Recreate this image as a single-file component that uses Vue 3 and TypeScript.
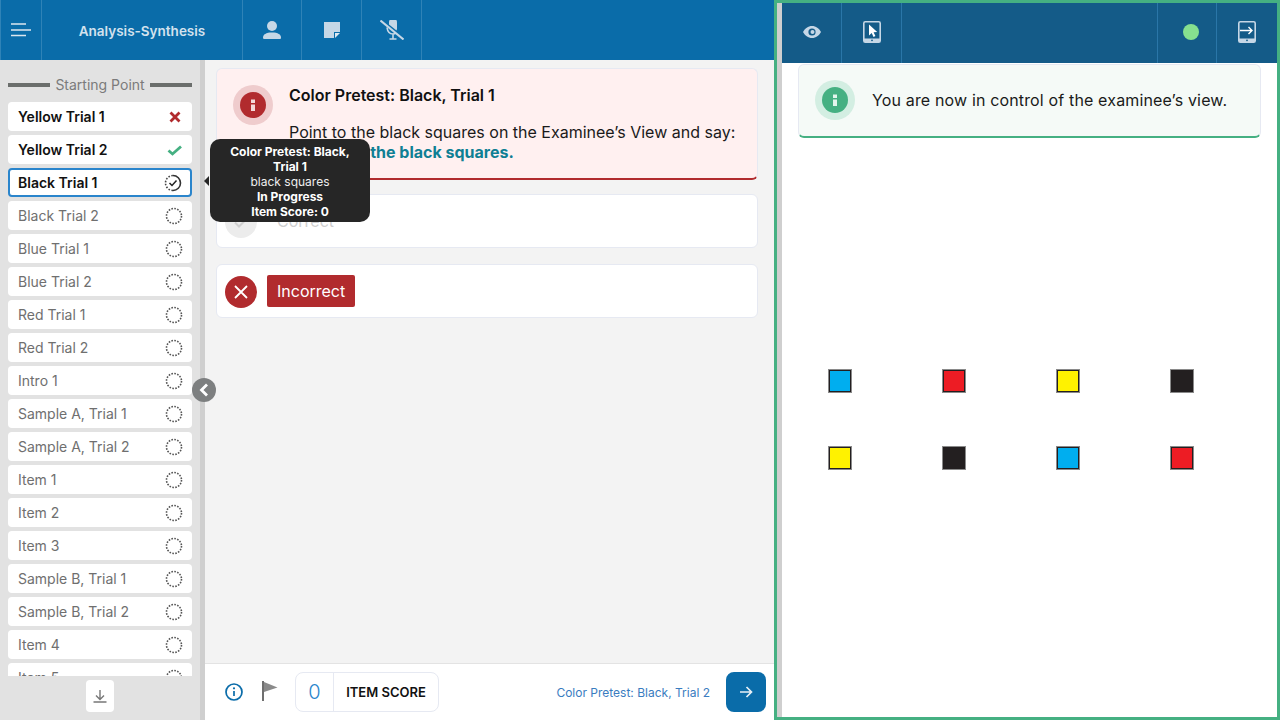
<script setup lang="ts">
interface Item {
  label: string
  status?: 'wrong' | 'correct' | 'progress'
}

const items: Item[] = [
  { label: 'Yellow Trial 1', status: 'wrong' },
  { label: 'Yellow Trial 2', status: 'correct' },
  { label: 'Black Trial 1', status: 'progress' },
  { label: 'Black Trial 2' },
  { label: 'Blue Trial 1' },
  { label: 'Blue Trial 2' },
  { label: 'Red Trial 1' },
  { label: 'Red Trial 2' },
  { label: 'Intro 1' },
  { label: 'Sample A, Trial 1' },
  { label: 'Sample A, Trial 2' },
  { label: 'Item 1' },
  { label: 'Item 2' },
  { label: 'Item 3' },
  { label: 'Sample B, Trial 1' },
  { label: 'Sample B, Trial 2' },
  { label: 'Item 4' },
  { label: 'Item 5' },
]

const squares = [
  '#00aeef', '#ed1c24', '#fff200', '#231f20',
  '#fff200', '#231f20', '#00aeef', '#ed1c24',
]
</script>

<template>
  <div class="app">
    <section class="examiner">
      <header class="topbar">
        <button class="cell menu" aria-label="Menu">
          <svg width="20" height="14" viewBox="0 0 20 14">
            <path d="M0 1h15M0 7h20M0 12.500h15" stroke="#dbe6ef" stroke-width="1.600" fill="none" />
          </svg>
        </button>
        <div class="cell title">Analysis-Synthesis</div>
        <button class="cell person" aria-label="Examinee">
          <svg width="18" height="18" viewBox="0 0 18 18" fill="#c6d7e6">
            <circle cx="9" cy="5" r="5" />
            <path d="M0 16.500C0 13.500 3 11.500 9 11.500s9 2 9 5c0 1-.5 1.500-1.500 1.500h-15C.5 18 0 17.500 0 16.500z" />
          </svg>
        </button>
        <button class="cell" aria-label="Notes">
          <svg width="16" height="16" viewBox="0 0 16 16">
            <path d="M0 0h16v10h-6v6H0z" fill="#c6d7e6" />
            <path d="M11 11h5l-5 5z" fill="#dfe8f0" />
          </svg>
        </button>
        <button class="cell" aria-label="Microphone off">
          <svg width="24" height="20" viewBox="0 0 24 20" fill="none" stroke="#c6d7e6">
            <path d="M9 2.500a4 4 0 0 1 8 0V9l-.5 1.500L9 4.500z" fill="#c6d7e6" stroke="none" />
            <path d="M7 7.500c.5 4 3 6.500 6 6.500 1 0 2-.2 2.800-.8M13 14v4.500M9.500 19h7" stroke-width="1.600" />
            <path d="M.5.500l23 19" stroke-width="2" />
          </svg>
        </button>
      </header>

      <div class="workspace">
        <aside class="sidebar">
          <div class="start"><span>Starting Point</span></div>
          <ul class="list">
            <li
              v-for="item in items"
              :key="item.label"
              class="row"
              :class="{ done: item.status, current: item.status === 'progress' }"
            >
              <span>{{ item.label }}</span>
              <svg v-if="item.status === 'wrong'" class="mark" width="16" height="16" viewBox="0 0 16 16">
                <path d="M3.500 3.500l9 9M12.500 3.500l-9 9" stroke="#b12b2e" stroke-width="2.800" fill="none" />
              </svg>
              <svg v-else-if="item.status === 'correct'" class="mark" width="16" height="16" viewBox="0 0 16 16">
                <path d="M1.500 8.500l4 3.500 8.500-7.500" stroke="#45b082" stroke-width="2.800" fill="none" />
              </svg>
              <svg v-else-if="item.status === 'progress'" class="mark" width="18" height="18" viewBox="0 0 18 18" fill="none">
                <path d="M9 1.500a7.500 7.500 0 0 1 0 15" stroke="#333" stroke-width="1.600" />
                <path d="M9 16.500a7.500 7.500 0 0 1 0-15" stroke="#444" stroke-width="1.600" stroke-dasharray="1.600 1.500" />
                <path d="M5.500 9l2.500 2.500 4.500-5" stroke="#222" stroke-width="1.500" />
              </svg>
              <svg v-else class="mark" width="18" height="18" viewBox="0 0 18 18" fill="none">
                <circle cx="9" cy="9" r="7.500" stroke="#555" stroke-width="1.600" stroke-dasharray="1.600 1.350" />
              </svg>
            </li>
          </ul>
          <div class="download">
            <button aria-label="Download">
              <svg width="14" height="14" viewBox="0 0 14 14" fill="none" stroke="#777" stroke-width="1.400">
                <path d="M7 1v9M3 6.500L7 10.500l4-4M.5 13h13" />
              </svg>
            </button>
          </div>
        </aside>

        <main class="main">
          <div class="content">
            <div class="alert">
              <span class="halo">
                <svg class="dot" width="26" height="26" viewBox="0 0 26 26">
                  <circle cx="13" cy="13" r="13" fill="#b12b2e" />
                  <path d="M11 7.500h4v3.500h-4zM11 12.500h4V19h-4z" fill="#f3d9d9" />
                </svg>
              </span>
              <div class="copy">
                <h2>Color Pretest: Black, Trial 1</h2>
                <p>
                  Point to the black squares on the Examinee’s View and say:
                  <strong>These are the black squares.</strong>
                </p>
              </div>
            </div>
            <div class="choice muted">
              <span class="choice-icon ok">
                <svg width="18" height="18" viewBox="0 0 18 18">
                  <path d="M3 9.500l4 4 8-8" stroke="#cfcfcf" stroke-width="2" fill="none" />
                </svg>
              </span>
              <span class="choice-label">Correct</span>
            </div>
            <div class="choice">
              <span class="choice-icon no">
                <svg width="18" height="18" viewBox="0 0 18 18">
                  <path d="M3 3l12 12M15 3L3 15" stroke="#fff" stroke-width="1.800" fill="none" />
                </svg>
              </span>
              <span class="badge">Incorrect</span>
            </div>
          </div>

          <footer class="footer">
            <svg class="info" width="18" height="18" viewBox="0 0 18 18" fill="none">
              <circle cx="9" cy="9" r="8" stroke="#0a6ca9" stroke-width="1.700" />
              <path d="M9 8v5" stroke="#0a6ca9" stroke-width="1.700" />
              <circle cx="9" cy="5.300" r="1.100" fill="#0a6ca9" />
            </svg>
            <svg class="flag" width="16" height="20" viewBox="0 0 16 20">
              <path d="M1 0v20" stroke="#6f6f6f" stroke-width="2" />
              <path d="M2 1l13.500 5.500L2 11z" fill="#8a8a8a" />
            </svg>
            <div class="score">
              <span class="num">0</span>
              <span class="score-label">ITEM SCORE</span>
            </div>
            <span class="next-label">Color Pretest: Black, Trial 2</span>
            <button class="next" aria-label="Next">
              <svg width="14" height="14" viewBox="0 0 14 14" fill="none" stroke="#e8f0f6" stroke-width="1.700">
                <path d="M1 7h11M7.500 2L12.500 7l-5 5" />
              </svg>
            </button>
          </footer>
        </main>

        <button class="collapse" aria-label="Collapse">
          <svg width="12" height="14" viewBox="0 0 12 14">
            <path d="M9 1.500L3.500 7 9 12.500" stroke="#fff" stroke-width="2.800" fill="none" />
          </svg>
        </button>

        <div class="tooltip">
          <b>Color Pretest: Black, Trial 1</b>
          <span>black squares</span>
          <b>In Progress</b>
          <b>Item Score: 0</b>
        </div>
      </div>
    </section>

    <section class="examinee">
      <div class="examinee-inner">
        <header class="viewbar">
          <button class="vcell" aria-label="View">
            <svg width="18" height="12" viewBox="0 0 18 12">
              <path d="M0 6c2-3.500 5-6 9-6s7 2.500 9 6c-2 3.500-5 6-9 6s-7-2.500-9-6z" fill="#c6d7e6" />
              <circle cx="9" cy="6" r="3.600" fill="#145b88" />
              <circle cx="9.500" cy="6" r="2" fill="#c6d7e6" />
            </svg>
          </button>
          <button class="vcell" aria-label="Control">
            <svg width="18" height="22" viewBox="0 0 18 22">
              <rect x=".8" y=".8" width="16.400" height="20.400" rx="1.500" fill="none" stroke="#c6d7e6" stroke-width="1.600" />
              <rect x="1" y="17.500" width="16" height="3.500" fill="#c6d7e6" />
              <circle cx="9" cy="19.300" r=".9" fill="#145b88" />
              <path d="M6 3.500l0 11 2.700-2.600 1.800 4 1.900-.9-1.800-3.800 3.600-.2z" fill="#fff" />
            </svg>
          </button>
          <span class="spacer"></span>
          <div class="vcell left-line status-cell"><span class="status"></span></div>
          <button class="vcell left-line last" aria-label="Exit">
            <svg width="18" height="22" viewBox="0 0 18 22">
              <rect x=".8" y=".8" width="16.400" height="20.400" rx="1.500" fill="none" stroke="#c6d7e6" stroke-width="1.600" />
              <rect x="1" y="17.500" width="16" height="3.500" fill="#c6d7e6" />
              <circle cx="9" cy="19.300" r=".9" fill="#145b88" />
              <path d="M2 9.500h12M10.500 6l3.500 3.500-3.500 3.500" fill="none" stroke="#fff" stroke-width="1.400" />
            </svg>
          </button>
        </header>
        <div class="view">
          <div class="notice">
            <span class="halo green">
              <svg class="dot" width="26" height="26" viewBox="0 0 26 26">
                <circle cx="13" cy="13" r="13" fill="#45b082" />
                <path d="M11 7.500h4v3.500h-4zM11 12.500h4V19h-4z" fill="#e3f5ec" />
              </svg>
            </span>
            <p>You are now in control of the examinee’s view.</p>
          </div>
          <div class="squares">
            <span
              v-for="(color, i) in squares"
              :key="i"
              class="square"
              :style="{ background: color }"
            ></span>
          </div>
        </div>
      </div>
    </section>
  </div>
</template>

<style>
html,
body {
  margin: 0;
  overflow: hidden;
}
</style>

<style scoped>
* {
  box-sizing: border-box;
}

button {
  border: none;
  padding: 0;
  background: none;
  font: inherit;
}

.app {
  display: flex;
  width: 1280px;
  height: 720px;
  font-family: Inter, "Liberation Sans", sans-serif;
  color: #111;
}

.examiner {
  display: flex;
  flex: none;
  flex-direction: column;
  width: 774px;
}

.topbar {
  display: flex;
  flex: none;
  height: 60px;
  background: #0a6ca9;
}

.cell {
  display: flex;
  align-items: center;
  justify-content: center;
  width: 60px;
  height: 60px;
  border-right: 1px solid #2f83b7;
}

.menu {
  width: 42px;
  border-left: 1px solid #2f83b7;
}

.title {
  width: 201px;
  padding-top: 1px;
  font-size: 13.500px;
  font-weight: 600;
  color: #d4e2ee;
}

.person {
  width: 59px;
}

.workspace {
  position: relative;
  display: flex;
  flex: 1;
  min-height: 0;
}

.sidebar {
  display: flex;
  flex: none;
  flex-direction: column;
  width: 205px;
  background: #e2e2e2;
  border-right: 5px solid #cfcfcf;
}

.start {
  display: flex;
  align-items: center;
  gap: 5px;
  height: 42px;
  padding: 7px 8px 0;
  font-size: 14px;
  color: #7b7b7b;
  white-space: nowrap;
}

.start::before,
.start::after {
  content: "";
  flex: 1;
  height: 4px;
  background: #6b6e6c;
}

.list {
  flex: 1;
  min-height: 0;
  margin: 0;
  padding: 0 8px;
  overflow: hidden;
  list-style: none;
}

.row {
  display: flex;
  align-items: center;
  justify-content: space-between;
  height: 29px;
  margin-bottom: 4px;
  padding: 0 9px 0 10px;
  border-radius: 4px;
  background: #fff;
  font-size: 14px;
  color: #6f6f6f;
}

.row.done {
  font-weight: 600;
  color: #111;
}

.row.current {
  border: 2px solid #2a85cc;
  padding: 0 8px;
}

.mark {
  flex: none;
}

.download {
  display: flex;
  flex: none;
  justify-content: center;
  height: 44px;
  padding-top: 4px;
}

.download button {
  display: flex;
  align-items: center;
  justify-content: center;
  width: 28px;
  height: 32px;
  border-radius: 4px;
  background: #fff;
}

.main {
  display: flex;
  flex: 1;
  flex-direction: column;
  min-width: 0;
  background: #f3f3f3;
}

.content {
  display: flex;
  flex: 1;
  flex-direction: column;
  gap: 16px;
  padding: 8px 16px 0 11px;
}

.alert {
  display: flex;
  gap: 16px;
  height: 112px;
  margin-bottom: -2px;
  padding: 16px;
  border: 1px solid #e6e9f2;
  border-bottom: 2px solid #b12b2e;
  border-radius: 6px;
  background: #fff0f0;
}

.halo {
  display: flex;
  flex: none;
  align-items: center;
  justify-content: center;
  width: 40px;
  height: 40px;
  border-radius: 50%;
  background: #efcccd;
}

.halo.green {
  background: #d3eee2;
}

.copy h2 {
  margin: 0;
  font-size: 16px;
  font-weight: 600;
  line-height: 20px;
  color: #111;
}

.copy p {
  margin: 17px 0 0;
  font-size: 16px;
  line-height: 20px;
  color: #1a1a1a;
}

.copy strong {
  font-weight: 700;
  color: #0f7f94;
}

.choice {
  display: flex;
  align-items: center;
  gap: 10px;
  height: 54px;
  padding: 0 8px;
  border: 1px solid #e6e9f2;
  border-radius: 6px;
  background: #fff;
}

.choice-icon {
  display: flex;
  flex: none;
  align-items: center;
  justify-content: center;
  width: 32px;
  height: 32px;
  margin-top: 1px;
  border-radius: 50%;
}

.choice-icon.ok {
  background: #ececec;
}

.choice-icon.no {
  background: #b12b2e;
}

.choice-label {
  padding-left: 10px;
  font-size: 16px;
  color: #cfcfcf;
}

.badge {
  display: flex;
  align-items: center;
  height: 32px;
  padding: 0 10px;
  border-radius: 2px;
  background: #b12b2e;
  font-size: 16px;
  color: #fff;
}

.footer {
  display: flex;
  flex: none;
  align-items: center;
  height: 57px;
  padding: 0 8px 0 20px;
  border-top: 1px solid #e3e3e3;
  background: #fff;
}

.info {
  margin-top: -1px;
}

.flag {
  margin: -2px 0 0 19px;
}

.score {
  display: flex;
  align-items: center;
  width: 144px;
  height: 40px;
  margin-left: 17px;
  border: 1px solid #e6e9f2;
  border-radius: 8px;
}

.num {
  width: 38px;
  font-size: 20px;
  font-weight: 300;
  line-height: 38px;
  text-align: center;
  color: #2a85cc;
  border-right: 1px solid #e6e9f2;
}

.score-label {
  flex: 1;
  font-size: 13px;
  font-weight: 600;
  text-align: center;
}

.next-label {
  margin-left: auto;
  font-size: 12px;
  color: #3a7cc0;
}

.next {
  display: flex;
  align-items: center;
  justify-content: center;
  width: 40px;
  height: 40px;
  margin-left: 16px;
  border-radius: 8px;
  background: #0a6ca9;
}

.collapse {
  position: absolute;
  top: 318px;
  left: 192px;
  display: flex;
  align-items: center;
  justify-content: center;
  width: 24px;
  height: 24px;
  border-radius: 50%;
  background: #7d7f80;
}

.tooltip {
  position: absolute;
  top: 79px;
  left: 210px;
  display: flex;
  flex-direction: column;
  width: 160px;
  height: 83px;
  padding: 5px 15px;
  border-radius: 10px;
  background: #262626;
  font-size: 12px;
  line-height: 15px;
  text-align: center;
  color: #eee;
}

.tooltip b {
  font-weight: 700;
  color: #fff;
}

.tooltip::before {
  content: "";
  position: absolute;
  top: 37px;
  left: -6px;
  border-top: 5px solid transparent;
  border-bottom: 5px solid transparent;
  border-right: 5px solid #262626;
}

.examinee {
  flex: 1;
  min-width: 0;
  border: 3px solid #45b082;
}

.examinee-inner {
  display: flex;
  flex-direction: column;
  height: 100%;
  border-left: 5px solid #cfcfcf;
  background: #fff;
}

.viewbar {
  display: flex;
  flex: none;
  height: 60px;
  padding-bottom: 2px;
  background: #145b88;
}

.vcell {
  display: flex;
  align-items: center;
  justify-content: center;
  width: 60px;
  margin-bottom: -2px;
  padding-bottom: 2px;
  border-right: 1px solid #2a76a8;
}

.vcell.left-line {
  border-right: none;
  border-left: 1px solid #2a76a8;
}

.status-cell {
  width: 59px;
  padding-left: 8px;
}

.vcell.last {
  width: 61px;
}

.spacer {
  flex: 1;
}

.status {
  width: 16px;
  height: 16px;
  border-radius: 50%;
  background: #86e08f;
}

.view {
  display: flex;
  flex: 1;
  flex-direction: column;
  padding: 1px 16px 0;
}

.notice {
  display: flex;
  flex: none;
  align-items: center;
  gap: 17px;
  height: 74px;
  padding: 0 16px 1px;
  border: 1px solid #e6e9f2;
  border-bottom: 2px solid #45b082;
  border-radius: 6px;
  background: #f5faf7;
}

.notice p {
  margin: 0;
  font-size: 16px;
  letter-spacing: .15px;
  color: #1a1a1a;
}

.squares {
  display: grid;
  grid-template-columns: repeat(4, 114px);
  row-gap: 53px;
  margin: 231px 0 0 30px;
}

.square {
  width: 24px;
  height: 24px;
  border: 1px solid #8a8a8a;
  box-shadow: inset 0 0 0 1px #231f20;
}
</style>
